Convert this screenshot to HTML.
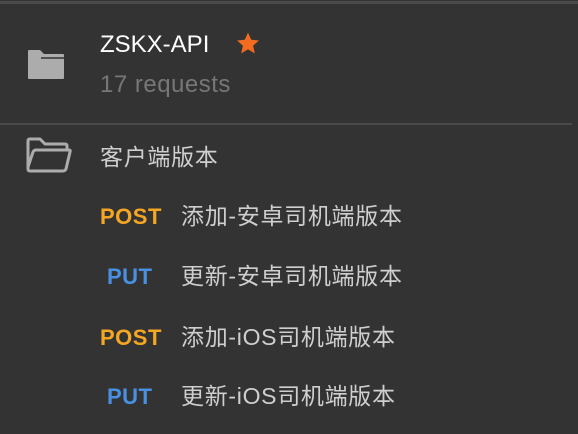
<!DOCTYPE html>
<html><head><meta charset="utf-8"><style>
body{margin:0;width:578px;height:434px;background:#333;overflow:hidden;position:relative;font-family:"Liberation Sans","Noto Sans CJK SC",sans-serif}
.a{position:absolute;white-space:nowrap;line-height:1}
.m{font-weight:bold;font-size:22px;letter-spacing:0.5px}
.post{color:#f5a623}.put{color:#4a90e2}
.t{color:#cfcfcf;font-size:23px;letter-spacing:0.7px}
</style></head><body>
<div class="a" style="left:0;top:1px;width:578px;height:3px;background:#4a4a4a"></div>
<div class="a" style="left:0;top:123px;width:572px;height:2px;background:#4a4a4a"></div>
<svg class="a" style="left:27px;top:49px" width="38" height="31" viewBox="0 0 38 31"><path d="M1 2 Q1 1 2 1 H13 L17 5 H36 Q37 5 37 6 V29 Q37 30 36 30 H2 Q1 30 1 29 Z" fill="#acacac"/><path d="M14 9 H37" stroke="#333" stroke-width="1.5"/></svg>
<div class="a" style="left:100px;top:33px;color:#fff;font-size:24px">ZSKX-API</div>
<svg class="a" style="left:235px;top:31px" width="26" height="25" viewBox="0 0 24 24"><path d="M12 1.5l3.1 6.9 7.4.7-5.6 5 1.7 7.4L12 17.6 5.4 21.5l1.7-7.4-5.6-5 7.4-.7z" fill="#f26b21"/></svg>
<div class="a" style="left:100px;top:73px;color:#777;font-size:24px;letter-spacing:0.5px">17 requests</div>
<svg class="a" style="left:25px;top:137px" width="48" height="37" viewBox="0 0 48 37"><path d="M3 30 V4 Q3 2 5 2 H15 L20 7 H40 Q42 7 42 9 V13 M3 30 L8 15 Q9 13 11 13 H44 Q46 13 45 15 L41 32 Q40 34 38 34 H5 Q3 34 3 32 Z" fill="none" stroke="#acacac" stroke-width="3" stroke-linejoin="round"/></svg>
<div class="a t" style="left:100px;top:146px">客户端版本</div>
<div class="a m post" style="left:100px;top:206px">POST</div><div class="a t" style="left:181px;top:205px">添加-安卓司机端版本</div>
<div class="a m put" style="left:107px;top:266px">PUT</div><div class="a t" style="left:181px;top:265px">更新-安卓司机端版本</div>
<div class="a m post" style="left:100px;top:327px">POST</div><div class="a t" style="left:181px;top:326px">添加-iOS司机端版本</div>
<div class="a m put" style="left:107px;top:386px">PUT</div><div class="a t" style="left:181px;top:385px">更新-iOS司机端版本</div>
</body></html>
